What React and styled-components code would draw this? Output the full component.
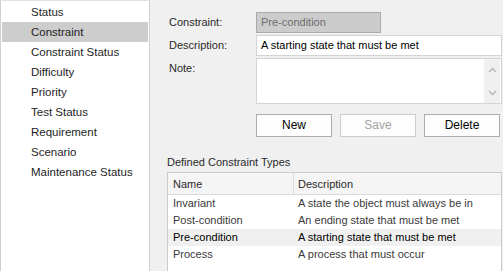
import React from 'react';
import styled, { createGlobalStyle } from 'styled-components';

const categories = [
    'Status',
    'Constraint',
    'Constraint Status',
    'Difficulty',
    'Priority',
    'Test Status',
    'Requirement',
    'Scenario',
    'Maintenance Status',
];

const constraintTypes = [
    { name: 'Invariant', description: 'A state the object must always be in' },
    { name: 'Post-condition', description: 'An ending state that must be met' },
    { name: 'Pre-condition', description: 'A starting state that must be met' },
    { name: 'Process', description: 'A process that must occur' },
];

const Chevron = ({ up }) => (
    <svg width="9" height="6" viewBox="0 0 9 6">
        <path
            d={up ? 'M1 5 L4.5 1.5 L8 5' : 'M1 1 L4.5 4.5 L8 1'}
            fill="none"
            stroke="#b4b4b4"
            strokeWidth="1.3"
        />
    </svg>
);

export default function App() {
    const selectedCategory = 'Constraint';
    const selectedType = 'Pre-condition';

    return (
        <>
            <GlobalStyle />
            <Window>
                <CategoryList>
                    {categories.map(cat => (
                        <CategoryItem key={cat} selected={cat === selectedCategory}>
                            {cat}
                        </CategoryItem>
                    ))}
                </CategoryList>

                <Panel>
                    <Form>
                        <Label>Constraint:</Label>
                        <Field disabled>Pre-condition</Field>
                        <Label>Description:</Label>
                        <Field>A starting state that must be met</Field>
                        <Label>Note:</Label>
                        <NoteBox>
                            <NoteText />
                            <ScrollBar>
                                <Chevron up />
                                <Chevron />
                            </ScrollBar>
                        </NoteBox>
                        <Buttons>
                            <Button>New</Button>
                            <Button disabled>Save</Button>
                            <Button>Delete</Button>
                        </Buttons>
                    </Form>

                    <SectionTitle>Defined Constraint Types</SectionTitle>
                    <Table>
                        <HeaderCell>Name</HeaderCell>
                        <HeaderCell divider>Description</HeaderCell>
                        {constraintTypes.map(t => (
                            <Row key={t.name} selected={t.name === selectedType}>
                                <Cell>{t.name}</Cell>
                                <Cell second>{t.description}</Cell>
                            </Row>
                        ))}
                    </Table>
                </Panel>
            </Window>
        </>
    );
}

const GlobalStyle = createGlobalStyle`
    html, body {
        margin: 0;
        padding: 0;
        background: #f0f0f0;
        overflow: hidden;
    }
    body {
        font-family: "Liberation Sans", Arial, sans-serif;
        color: #1e1e1e;
    }
`

const Window = styled.div`
    display: flex;
    width: 503px;
    height: 271px;
    overflow: hidden;
`

const CategoryList = styled.div`
    box-sizing: border-box;
    width: 150px;
    height: 280px;
    flex-shrink: 0;
    background: #fff;
    border: 1px solid #cfcfcf;
    border-top-color: #e3e3e3;
    padding: 1px;
`

const CategoryItem = styled.div`
    height: 20px;
    line-height: 20px;
    padding-left: 29px;
    font-size: 11.5px;
    color: #1e1e1e;
    background: ${p => (p.selected ? '#cdcdcd' : 'transparent')};
    white-space: nowrap;
`

const Panel = styled.div`
    flex: 1;
    display: flex;
    flex-direction: column;
    padding: 12px 1px 0 19px;
    min-width: 0;
`

const Form = styled.div`
    display: grid;
    grid-template-columns: 87px 1fr;
    row-gap: 2px;
    font-size: 11px;
`

const Label = styled.div`
    line-height: 20px;
    color: #2a2a2a;
`

const Field = styled.div`
    box-sizing: border-box;
    height: 21px;
    line-height: 19px;
    padding: 0 4px;
    border: 1px solid ${p => (p.disabled ? '#ababab' : '#d4d4d4')};
    background: ${p => (p.disabled ? '#cccccc' : '#fff')};
    color: ${p => (p.disabled ? '#6d6d6d' : '#000')};
    white-space: nowrap;
    ${p => p.disabled && 'width: 125px;'}
`

const NoteBox = styled.div`
    box-sizing: border-box;
    height: 46px;
    border: 1px solid #d4d4d4;
    background: #fff;
    display: flex;
`

const NoteText = styled.div`
    flex: 1;
`

const ScrollBar = styled.div`
    width: 16px;
    margin: 0 1px 0 0;
    background: #f0f0f0;
    display: flex;
    flex-direction: column;
    align-items: center;
    justify-content: space-between;
    padding: 8px 0 7px;
`

const Buttons = styled.div`
    grid-column: 2;
    display: flex;
    gap: 8px;
    margin-top: 8px;
`

const Button = styled.div`
    box-sizing: border-box;
    width: 76px;
    height: 23px;
    line-height: 21px;
    text-align: center;
    font-size: 12px;
    background: #fdfdfd;
    border: 1px solid ${p => (p.disabled ? '#cccccc' : '#adadad')};
    color: ${p => (p.disabled ? '#a3a3a3' : '#000')};
`

const SectionTitle = styled.div`
    margin: 18px 0 3px -2px;
    font-size: 11px;
    line-height: 14px;
    color: #2a2a2a;
`

const Table = styled.div`
    flex: 1;
    margin-left: -2px;
    box-sizing: border-box;
    background: #fff;
    border: 1px solid #cbcbcb;
    border-bottom: none;
    display: grid;
    grid-template-columns: 125px 1fr;
    grid-auto-rows: 17px;
    grid-template-rows: 22px;
    align-content: start;
    font-size: 11px;
`

const HeaderCell = styled.div`
    background: #f5f5f5;
    border-bottom: 1px solid #d9d9d9;
    border-left: ${p => (p.divider ? '1px solid #dcdcdc' : 'none')};
    line-height: 22px;
    padding-left: ${p => (p.divider ? '4px' : '5px')};
    color: #2a2a2a;
`

const Row = styled.div`
    display: contents;
    & > div {
        background: ${p => (p.selected ? '#f0f0f0' : '#fff')};
        color: ${p => (p.selected ? '#000' : '#3a3a3a')};
    }
`

const Cell = styled.div`
    line-height: 17px;
    padding-left: ${p => (p.second ? '5px' : '5px')};
    white-space: nowrap;
    overflow: hidden;
`
